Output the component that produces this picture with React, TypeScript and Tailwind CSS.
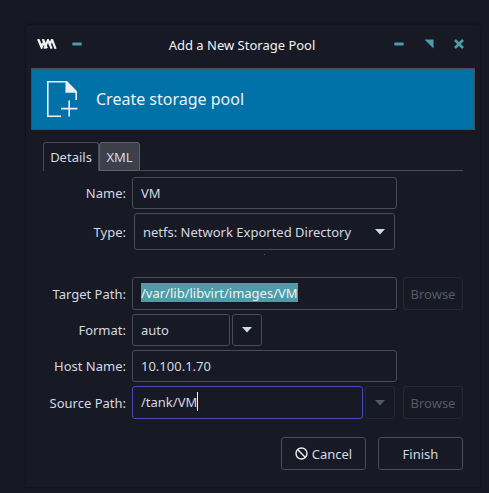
import type { ReactNode } from "react";

const field =
  "rounded-[3px] border border-[#4a4b56] bg-[#171924] text-[#d3dae3] outline-none";
const button =
  "flex items-center justify-center rounded-[3px] border border-[#4a4b56] text-[#d3dae3]";
const disabledButton =
  "flex items-center justify-center rounded-[3px] border border-[#252732] text-[#555963]";

function Arrow() {
  return (
    <svg width="10" height="6" viewBox="0 0 10 6" fill="currentColor" aria-hidden="true">
      <path d="M0 0h10L5 5.5z" />
    </svg>
  );
}

function Minimise() {
  return (
    <svg width="10" height="10" viewBox="0 0 10 10" fill="#4d9ca8" aria-hidden="true">
      <rect x="0.3" y="3.5" width="9.4" height="3" rx="0.7" />
    </svg>
  );
}

function Label({ htmlFor, children }: { htmlFor: string; children: ReactNode }) {
  return (
    <label htmlFor={htmlFor} className="text-right whitespace-nowrap">
      {children}
    </label>
  );
}

export default function App() {
  return (
    <div className="min-h-screen bg-[#161925] pt-[25px] pr-[9px] pb-1.5 pl-[26px] font-['Noto_Sans','Liberation_Sans',sans-serif] text-[13px] leading-[18px] text-[#d3dae3]">
      <main className="rounded-t-[3px] bg-[#171924] px-[5px] pb-[17px] shadow-[0_0_2px_1px_#11131d]">
        <header className="flex h-[43px] items-center pr-[11px] pb-1.5 pl-[6px]">
          <svg width="20" height="10" viewBox="0 0 20 10" fill="none" stroke="#eef0f2" strokeWidth="2.4" aria-hidden="true">
            <path d="M1.2 0l3.4 8.2L6.4 4" />
            <path d="M5.8 0l4 9.4" />
            <path d="M7.4 9.6L11 1l3.6 8.6" strokeWidth="2.2" />
            <path d="M12.6 6L15 .6l3.6 9.2" strokeWidth="2.2" />
          </svg>
          <button type="button" aria-label="Shade" className="ml-[15px]"><Minimise /></button>
          <h1 className="mt-0.5 flex-1 pl-2 text-center text-[13px] leading-[18px] text-[#f2f3f5]">Add a New Storage Pool</h1>
          <div className="flex items-center gap-5">
            <button type="button" aria-label="Minimise"><Minimise /></button>
            <button type="button" aria-label="Maximise">
              <svg width="10" height="10" viewBox="0 0 10 10" fill="#4d9ca8" aria-hidden="true"><path d="M0.5 0.5h9v9z" /></svg>
            </button>
            <button type="button" aria-label="Close">
              <svg width="10" height="10" viewBox="0 0 10 10" stroke="#4d9ca8" strokeWidth="2.6" aria-hidden="true"><path d="M1 1l8 8M9 1l-8 8" /></svg>
            </button>
          </div>
        </header>

        <section className="flex h-[62px] items-center border border-[#4a4b56] bg-[#0072a8] pl-[15px] text-[#eef1f3]">
          <svg width="31" height="38" viewBox="0 0 31 38" fill="none" stroke="currentColor" strokeWidth="1.6" aria-hidden="true">
            <path d="M14 36.2H.8V1.8H19M29.2 12v8" />
            <path d="M18.5 1h1.5l10 10.2v1.6H18.5z" fill="currentColor" stroke="none" />
            <path d="M14 28.6h16.5M22.2 20.5v16" />
          </svg>
          <h2 className="ml-[18px] text-[16px] leading-6">Create storage pool</h2>
        </section>

        <div className="mx-3 mt-3">
          <div role="tablist" className="flex h-[29px]">
            <button type="button" role="tab" aria-selected="true" className="w-14 rounded-t-[3px] border border-b-0 border-[#4a4b56]">Details</button>
            <button type="button" role="tab" aria-selected="false" className="w-[41px] rounded-t-[3px] border border-[#5d616c] bg-[#3d404b]">XML</button>
            <div className="flex-1 border-b border-[#4a4b56]" />
          </div>

          <form>
            <div className="mt-1.5 grid grid-cols-[83px_1fr_60px] items-center gap-x-1.5 gap-y-1">
              <Label htmlFor="name">Name:</Label>
              <input id="name" defaultValue="VM" className={`${field} h-8 w-full min-w-0 px-2`} />
              <span />

              <Label htmlFor="type">Type:</Label>
              <div className="relative mx-0.5">
                <select id="type" className={`${field} h-[37px] w-full appearance-none pr-8 pl-2`}>
                  <option>netfs: Network Exported Directory</option>
                </select>
                <span className="pointer-events-none absolute inset-y-0 right-2.5 flex items-center"><Arrow /></span>
              </div>
              <span />

              <div className="col-start-2 h-[19px]">
                <div className="mx-auto size-px bg-[#555963]" />
              </div>
              <span />

              <Label htmlFor="target">Target Path:</Label>
              <div className={`${field} flex h-[33px] min-w-0 items-center px-2 pb-0.5`}>
                <input id="target" defaultValue="/var/lib/libvirt/images/VM" className="field-sizing-content h-[19px] max-w-full bg-[#4d9ca8] text-[#f0f3f5] outline-none" />
              </div>
              <button type="button" disabled className={`${disabledButton} h-[33px]`}>Browse</button>

              <Label htmlFor="format">Format:</Label>
              <div className="flex gap-0.5">
                <input id="format" defaultValue="auto" className={`${field} h-8 w-[98px] px-2`} />
                <button type="button" aria-label="Choose format" className={`${button} w-[30px]`}><Arrow /></button>
              </div>
              <span />

              <Label htmlFor="host">Host Name:</Label>
              <input id="host" defaultValue="10.100.1.70" className={`${field} h-8 w-full min-w-0 px-2`} />
              <span />

              <Label htmlFor="source">Source Path:</Label>
              <div className="flex gap-0.5 pr-0.5">
                <div className="flex h-[33px] min-w-0 flex-1 items-center rounded-[3px] border border-[#4d4bb5] px-2 pb-0.5">
                  <input id="source" defaultValue="/tank/VM" className="field-sizing-content h-[19px] max-w-full outline-none" />
                  <span className="h-[19px] w-px bg-[#f2f3f5]" />
                </div>
                <button type="button" disabled aria-label="Choose source" className={`${disabledButton} w-[30px]`}><Arrow /></button>
              </div>
              <button type="button" disabled className={`${disabledButton} h-[33px]`}>Browse</button>
            </div>

            <div className="mt-[18px] flex justify-end gap-3">
              <button type="button" className={`${button} h-[33px] w-[85px] gap-1`}>
                <svg width="13" height="13" viewBox="0 0 13 13" fill="none" stroke="#eef0f2" strokeWidth="1.4" aria-hidden="true">
                  <circle cx="6.5" cy="6.5" r="5.5" />
                  <path d="M2.6 2.6l7.8 7.8" />
                </svg>
                Cancel
              </button>
              <button type="submit" className={`${button} h-[33px] w-[85px]`}>Finish</button>
            </div>
          </form>
        </div>
      </main>
    </div>
  );
}
